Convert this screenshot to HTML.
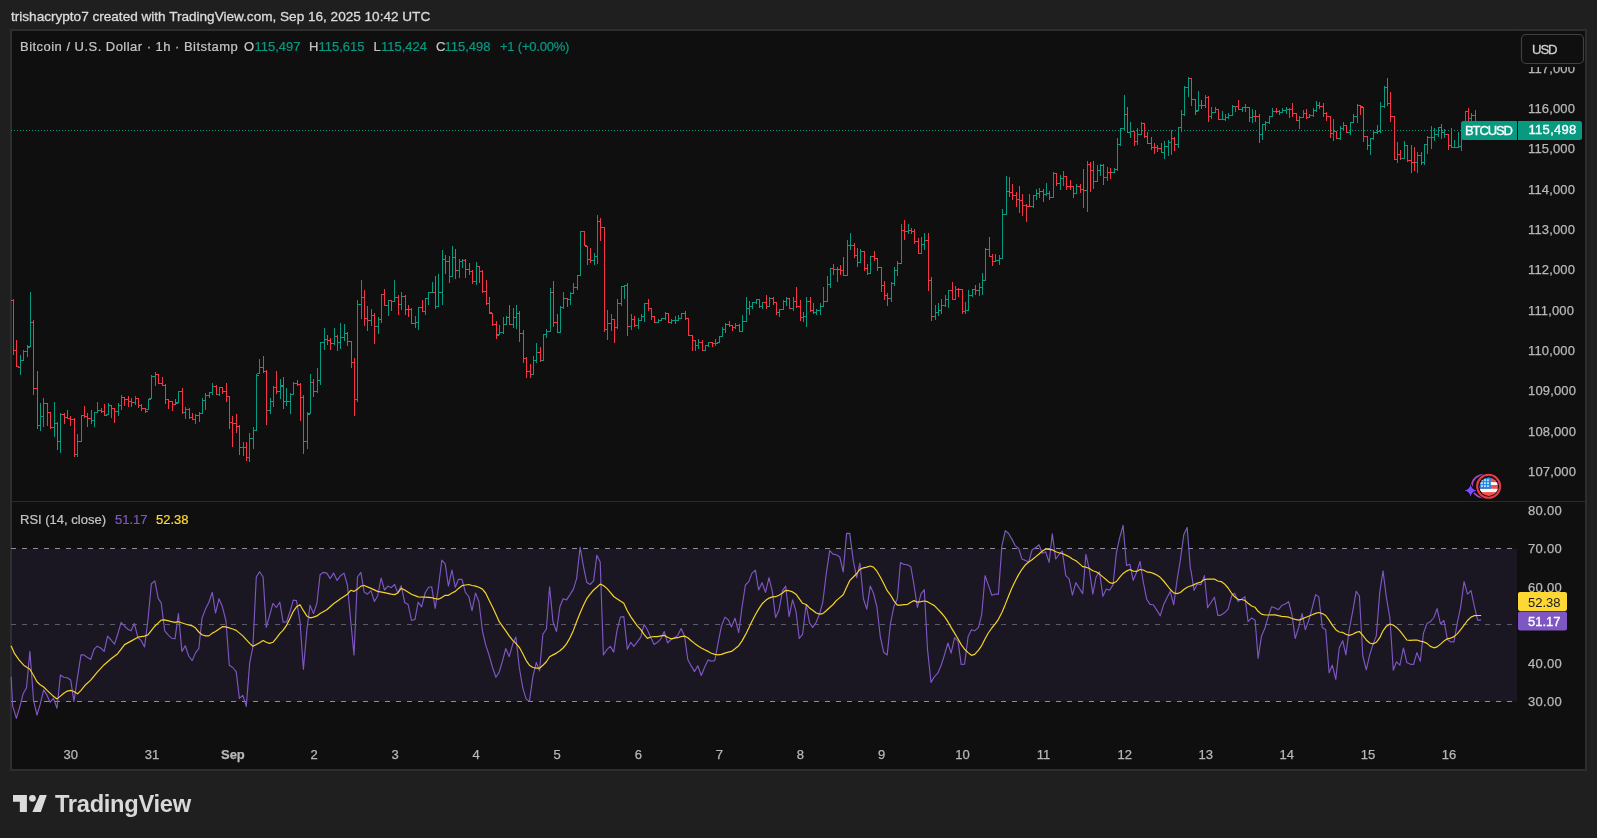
<!DOCTYPE html>
<html lang="en"><head><meta charset="utf-8"><title>BTCUSD chart</title>
<style>
html,body{margin:0;padding:0;background:#1f1f1f;}
body{width:1597px;height:838px;overflow:hidden;position:relative;font-family:"Liberation Sans",sans-serif;}
svg{position:absolute;left:0;top:0;will-change:transform;}
.hd,.lg,.logo{will-change:transform;}
svg text{font-family:"Liberation Sans",sans-serif;font-size:13px;fill:#b8b8b8;}
#paxis text,#raxis text,#taxis text{stroke:#b8b8b8;stroke-width:0.25px;}
#paxis text{letter-spacing:0.15px;}
#raxis text{letter-spacing:0.3px;}
.hd{position:absolute;left:11px;top:9px;font-size:13.6px;line-height:16px;color:#dbdbdb;white-space:nowrap;letter-spacing:-0.01px;-webkit-text-stroke:0.3px #dbdbdb;}
.lg{position:absolute;left:20px;top:39px;font-size:13px;line-height:16px;color:#c4c4c4;white-space:nowrap;}
.lg span{position:absolute;top:0;-webkit-text-stroke:0.22px currentColor;}
.gr{color:#089981;}
.logo{position:absolute;left:55px;top:790px;font-size:23.7px;line-height:28px;font-weight:bold;color:#d9d9d9;letter-spacing:-0.3px;white-space:nowrap;}
</style></head><body>
<svg width="1597" height="838" viewBox="0 0 1597 838">
<rect x="11" y="30" width="1575" height="740" fill="#0f0f0f" stroke="#2e2e2e" stroke-width="2"/>
<rect x="12" y="501" width="1573" height="1" fill="#2a2a2a"/>
<!-- RSI band -->
<rect x="12" y="549" width="1505" height="152.5" fill="#1a1622"/>
<g stroke="#8e8e9a" stroke-width="1" stroke-dasharray="5 6" shape-rendering="crispEdges">
<path d="M11 548.5H1517"/><path d="M11 701.5H1517"/><path d="M11 624.5H1517" stroke="#5c5c68"/></g>
<!-- price line -->
<path d="M11 130.5H1461" stroke="#089981" stroke-width="1" stroke-dasharray="1 2" shape-rendering="crispEdges"/>
<g id="bars"><g stroke-width="1" fill="none" shape-rendering="crispEdges"><path d="M13.5 299V355M11 300.5h2.5M13.5 350.5h2.5M16.5 340V367M14 350.5h2.5M16.5 366.5h2.5" stroke="#f23645"/><path d="M20.5 355V375M18 367.5h2.5M20.5 360.5h2.5M23.5 350V361M21 360.5h2.5M23.5 351.5h2.5M27.5 345V357M25 351.5h2.5M27.5 347.5h2.5M30.5 292V347M28 346.5h2.5M30.5 322.5h2.5" stroke="#089981"/><path d="M33.5 320V395M31 322.5h2.5M33.5 388.5h2.5M37.5 371V429M35 388.5h2.5M37.5 425.5h2.5" stroke="#f23645"/><path d="M40.5 403V431M38 425.5h2.5M40.5 416.5h2.5M43.5 398V427M41 416.5h2.5M43.5 403.5h2.5" stroke="#089981"/><path d="M47.5 403V426M45 403.5h2.5M47.5 412.5h2.5M50.5 412V429M48 412.5h2.5M50.5 427.5h2.5" stroke="#f23645"/><path d="M54.5 402V437M52 427.5h2.5M54.5 423.5h2.5" stroke="#089981"/><path d="M57.5 422V450M55 423.5h2.5M57.5 441.5h2.5" stroke="#f23645"/><path d="M60.5 413V453M58 441.5h2.5M60.5 414.5h2.5" stroke="#089981"/><path d="M64.5 413V424M62 414.5h2.5M64.5 417.5h2.5M67.5 410V419M65 417.5h2.5M67.5 418.5h2.5M70.5 416V426M68 418.5h2.5M70.5 419.5h2.5M74.5 418V457M72 419.5h2.5M74.5 454.5h2.5" stroke="#f23645"/><path d="M77.5 434V457M75 454.5h2.5M77.5 441.5h2.5M81.5 415V442M79 441.5h2.5M81.5 415.5h2.5" stroke="#089981"/><path d="M84.5 406V418M82 415.5h2.5M84.5 416.5h2.5M87.5 413V427M85 416.5h2.5M87.5 418.5h2.5M91.5 410V424M89 418.5h2.5M91.5 420.5h2.5" stroke="#f23645"/><path d="M94.5 412V427M92 420.5h2.5M94.5 412.5h2.5M97.5 402V413M95 412.5h2.5M97.5 410.5h2.5" stroke="#089981"/><path d="M101.5 408V413M99 410.5h2.5M101.5 411.5h2.5M104.5 404V416M102 411.5h2.5M104.5 415.5h2.5" stroke="#f23645"/><path d="M108.5 403V415M106 414.5h2.5M108.5 405.5h2.5" stroke="#089981"/><path d="M111.5 405V418M109 405.5h2.5M111.5 408.5h2.5M114.5 408V423M112 408.5h2.5M114.5 411.5h2.5" stroke="#f23645"/><path d="M118.5 403V416M116 411.5h2.5M118.5 405.5h2.5M121.5 395V410M119 405.5h2.5M121.5 397.5h2.5" stroke="#089981"/><path d="M124.5 397V406M122 397.5h2.5M124.5 399.5h2.5M128.5 396V407M126 399.5h2.5M128.5 401.5h2.5M131.5 398V407M129 401.5h2.5M131.5 402.5h2.5" stroke="#f23645"/><path d="M135.5 396V405M133 402.5h2.5M135.5 398.5h2.5" stroke="#089981"/><path d="M138.5 398V408M136 398.5h2.5M138.5 405.5h2.5M141.5 404V411M139 405.5h2.5M141.5 408.5h2.5M145.5 408V413M143 408.5h2.5M145.5 411.5h2.5" stroke="#f23645"/><path d="M148.5 399V410M146 409.5h2.5M148.5 399.5h2.5M151.5 375V399M149 398.5h2.5M151.5 376.5h2.5M155.5 372V386M153 376.5h2.5M155.5 374.5h2.5" stroke="#089981"/><path d="M158.5 374V384M156 374.5h2.5M158.5 383.5h2.5M162.5 377V386M160 383.5h2.5M162.5 385.5h2.5M165.5 384V404M163 385.5h2.5M165.5 399.5h2.5M168.5 399V409M166 399.5h2.5M168.5 401.5h2.5M172.5 401V411M170 401.5h2.5M172.5 404.5h2.5M175.5 399V405M173 404.5h2.5M175.5 403.5h2.5" stroke="#f23645"/><path d="M178.5 391V403M176 402.5h2.5M178.5 391.5h2.5" stroke="#089981"/><path d="M182.5 388V414M180 391.5h2.5M182.5 412.5h2.5" stroke="#f23645"/><path d="M185.5 407V419M183 412.5h2.5M185.5 409.5h2.5" stroke="#089981"/><path d="M189.5 408V419M187 409.5h2.5M189.5 417.5h2.5M192.5 413V420M190 417.5h2.5M192.5 419.5h2.5" stroke="#f23645"/><path d="M195.5 414V424M193 419.5h2.5M195.5 415.5h2.5M199.5 412V422M197 415.5h2.5M199.5 413.5h2.5M202.5 398V414M200 413.5h2.5M202.5 400.5h2.5M205.5 393V410M203 400.5h2.5M205.5 395.5h2.5M209.5 392V398M207 395.5h2.5M209.5 392.5h2.5M212.5 383V395M210 392.5h2.5M212.5 386.5h2.5" stroke="#089981"/><path d="M216.5 385V395M214 386.5h2.5M216.5 394.5h2.5" stroke="#f23645"/><path d="M219.5 387V396M217 394.5h2.5M219.5 387.5h2.5" stroke="#089981"/><path d="M222.5 387V394M220 387.5h2.5M222.5 391.5h2.5M226.5 383V402M224 391.5h2.5M226.5 396.5h2.5M229.5 396V429M227 396.5h2.5M229.5 422.5h2.5M232.5 416V447M230 422.5h2.5M232.5 423.5h2.5M236.5 414V433M234 423.5h2.5M236.5 426.5h2.5M239.5 425V455M237 426.5h2.5M239.5 447.5h2.5" stroke="#f23645"/><path d="M243.5 442V456M241 447.5h2.5M243.5 447.5h2.5" stroke="#089981"/><path d="M246.5 442V461M244 447.5h2.5M246.5 457.5h2.5" stroke="#f23645"/><path d="M249.5 433V462M247 457.5h2.5M249.5 438.5h2.5M253.5 427V449M251 438.5h2.5M253.5 430.5h2.5M256.5 374V431M254 430.5h2.5M256.5 375.5h2.5M259.5 359V374M257 373.5h2.5M259.5 367.5h2.5" stroke="#089981"/><path d="M263.5 356V373M261 367.5h2.5M263.5 371.5h2.5M266.5 370V425M264 371.5h2.5M266.5 410.5h2.5" stroke="#f23645"/><path d="M270.5 398V414M268 410.5h2.5M270.5 401.5h2.5M273.5 386V407M271 401.5h2.5M273.5 387.5h2.5" stroke="#089981"/><path d="M276.5 371V394M274 387.5h2.5M276.5 391.5h2.5" stroke="#f23645"/><path d="M280.5 379V399M278 391.5h2.5M280.5 386.5h2.5" stroke="#089981"/><path d="M283.5 377V409M281 385.5h2.5M283.5 401.5h2.5" stroke="#f23645"/><path d="M286.5 388V406M284 401.5h2.5M286.5 401.5h2.5M290.5 393V414M288 401.5h2.5M290.5 394.5h2.5M293.5 382V395M291 394.5h2.5M293.5 383.5h2.5" stroke="#089981"/><path d="M297.5 380V386M295 383.5h2.5M297.5 384.5h2.5M300.5 383V421M298 384.5h2.5M300.5 397.5h2.5M303.5 395V454M301 397.5h2.5M303.5 441.5h2.5" stroke="#f23645"/><path d="M307.5 412V449M305 441.5h2.5M307.5 414.5h2.5M310.5 374V414M308 413.5h2.5M310.5 382.5h2.5" stroke="#089981"/><path d="M313.5 379V397M311 382.5h2.5M313.5 391.5h2.5" stroke="#f23645"/><path d="M317.5 368V393M315 391.5h2.5M317.5 380.5h2.5M320.5 342V385M318 380.5h2.5M320.5 342.5h2.5M324.5 328V350M322 342.5h2.5M324.5 339.5h2.5" stroke="#089981"/><path d="M327.5 335V345M325 339.5h2.5M327.5 340.5h2.5M330.5 338V350M328 340.5h2.5M330.5 343.5h2.5" stroke="#f23645"/><path d="M334.5 328V345M332 343.5h2.5M334.5 336.5h2.5" stroke="#089981"/><path d="M337.5 335V351M335 336.5h2.5M337.5 342.5h2.5" stroke="#f23645"/><path d="M340.5 323V349M338 342.5h2.5M340.5 337.5h2.5M344.5 324V341M342 337.5h2.5M344.5 333.5h2.5" stroke="#089981"/><path d="M347.5 332V346M345 333.5h2.5M347.5 341.5h2.5M351.5 341V368M349 341.5h2.5M351.5 362.5h2.5M354.5 358V416M352 362.5h2.5M354.5 399.5h2.5" stroke="#f23645"/><path d="M357.5 300V402M355 399.5h2.5M357.5 304.5h2.5M361.5 280V319M359 304.5h2.5M361.5 297.5h2.5" stroke="#089981"/><path d="M364.5 290V326M362 297.5h2.5M364.5 318.5h2.5M367.5 306V331M365 318.5h2.5M367.5 320.5h2.5" stroke="#f23645"/><path d="M371.5 309V326M369 320.5h2.5M371.5 315.5h2.5" stroke="#089981"/><path d="M374.5 313V344M372 315.5h2.5M374.5 326.5h2.5" stroke="#f23645"/><path d="M378.5 317V334M376 326.5h2.5M378.5 319.5h2.5M381.5 294V323M379 319.5h2.5M381.5 294.5h2.5" stroke="#089981"/><path d="M384.5 289V306M382 294.5h2.5M384.5 305.5h2.5" stroke="#f23645"/><path d="M388.5 300V316M386 305.5h2.5M388.5 300.5h2.5" stroke="#089981"/><path d="M391.5 300V311M389 300.5h2.5M391.5 301.5h2.5" stroke="#f23645"/><path d="M394.5 280V302M392 301.5h2.5M394.5 297.5h2.5" stroke="#089981"/><path d="M398.5 295V315M396 297.5h2.5M398.5 304.5h2.5" stroke="#f23645"/><path d="M401.5 292V310M399 304.5h2.5M401.5 296.5h2.5" stroke="#089981"/><path d="M405.5 295V315M403 296.5h2.5M405.5 309.5h2.5M408.5 305V317M406 309.5h2.5M408.5 309.5h2.5M411.5 308V324M409 309.5h2.5M411.5 323.5h2.5" stroke="#f23645"/><path d="M415.5 316V328M413 323.5h2.5M415.5 322.5h2.5M418.5 307V330M416 322.5h2.5M418.5 307.5h2.5" stroke="#089981"/><path d="M422.5 300V312M420 307.5h2.5M422.5 311.5h2.5" stroke="#f23645"/><path d="M425.5 298V315M423 311.5h2.5M425.5 298.5h2.5M428.5 292V305M426 298.5h2.5M428.5 292.5h2.5M432.5 282V293M430 292.5h2.5M432.5 292.5h2.5" stroke="#089981"/><path d="M435.5 276V309M433 292.5h2.5M435.5 306.5h2.5" stroke="#f23645"/><path d="M438.5 274V307M436 306.5h2.5M438.5 292.5h2.5M442.5 250V305M440 292.5h2.5M442.5 259.5h2.5" stroke="#089981"/><path d="M445.5 255V274M443 259.5h2.5M445.5 261.5h2.5M449.5 256V283M447 261.5h2.5M449.5 276.5h2.5" stroke="#f23645"/><path d="M452.5 246V277M450 276.5h2.5M452.5 257.5h2.5" stroke="#089981"/><path d="M455.5 249V279M453 257.5h2.5M455.5 270.5h2.5" stroke="#f23645"/><path d="M459.5 259V278M457 270.5h2.5M459.5 261.5h2.5M462.5 259V268M460 261.5h2.5M462.5 260.5h2.5" stroke="#089981"/><path d="M465.5 259V278M463 260.5h2.5M465.5 269.5h2.5M469.5 263V275M467 269.5h2.5M469.5 271.5h2.5M472.5 270V284M470 271.5h2.5M472.5 281.5h2.5" stroke="#f23645"/><path d="M476.5 262V285M474 281.5h2.5M476.5 266.5h2.5" stroke="#089981"/><path d="M479.5 266V283M477 266.5h2.5M479.5 271.5h2.5M482.5 270V293M480 271.5h2.5M482.5 291.5h2.5M486.5 280V305M484 291.5h2.5M486.5 303.5h2.5M489.5 297V314M487 303.5h2.5M489.5 312.5h2.5M492.5 313V326M490 313.5h2.5M492.5 324.5h2.5M496.5 321V339M494 324.5h2.5M496.5 335.5h2.5" stroke="#f23645"/><path d="M499.5 325V335M497 334.5h2.5M499.5 332.5h2.5M503.5 317V334M501 332.5h2.5M503.5 324.5h2.5M506.5 316V325M504 324.5h2.5M506.5 317.5h2.5" stroke="#089981"/><path d="M509.5 305V325M507 317.5h2.5M509.5 324.5h2.5" stroke="#f23645"/><path d="M513.5 308V328M511 324.5h2.5M513.5 317.5h2.5M516.5 305V329M514 317.5h2.5M516.5 313.5h2.5" stroke="#089981"/><path d="M519.5 311V342M517 313.5h2.5M519.5 333.5h2.5M523.5 330V363M521 333.5h2.5M523.5 358.5h2.5M526.5 357V378M524 358.5h2.5M526.5 371.5h2.5M530.5 364V378M528 371.5h2.5M530.5 374.5h2.5" stroke="#f23645"/><path d="M533.5 356V375M531 374.5h2.5M533.5 360.5h2.5M536.5 343V363M534 360.5h2.5M536.5 352.5h2.5" stroke="#089981"/><path d="M540.5 347V362M538 352.5h2.5M540.5 360.5h2.5" stroke="#f23645"/><path d="M543.5 334V361M541 360.5h2.5M543.5 334.5h2.5M546.5 329V338M544 334.5h2.5M546.5 331.5h2.5M550.5 288V332M548 331.5h2.5M550.5 292.5h2.5" stroke="#089981"/><path d="M553.5 281V327M551 292.5h2.5M553.5 322.5h2.5M557.5 314V333M555 322.5h2.5M557.5 332.5h2.5" stroke="#f23645"/><path d="M560.5 306V333M558 332.5h2.5M560.5 307.5h2.5M563.5 292V309M561 307.5h2.5M563.5 298.5h2.5" stroke="#089981"/><path d="M567.5 298V307M565 298.5h2.5M567.5 299.5h2.5" stroke="#f23645"/><path d="M570.5 292V305M568 299.5h2.5M570.5 293.5h2.5M573.5 283V294M571 293.5h2.5M573.5 287.5h2.5M577.5 275V290M575 287.5h2.5M577.5 275.5h2.5M580.5 231V276M578 275.5h2.5M580.5 231.5h2.5" stroke="#089981"/><path d="M584.5 231V246M582 231.5h2.5M584.5 245.5h2.5M587.5 246V265M585 246.5h2.5M587.5 259.5h2.5M590.5 248V263M588 259.5h2.5M590.5 260.5h2.5" stroke="#f23645"/><path d="M594.5 253V265M592 260.5h2.5M594.5 256.5h2.5M597.5 215V264M595 256.5h2.5M597.5 221.5h2.5" stroke="#089981"/><path d="M600.5 218V241M598 221.5h2.5M600.5 227.5h2.5M604.5 227V332M602 227.5h2.5M604.5 329.5h2.5" stroke="#f23645"/><path d="M607.5 310V340M605 329.5h2.5M607.5 323.5h2.5M611.5 314V331M609 323.5h2.5M611.5 319.5h2.5" stroke="#089981"/><path d="M614.5 319V343M612 319.5h2.5M614.5 327.5h2.5" stroke="#f23645"/><path d="M617.5 299V329M615 327.5h2.5M617.5 303.5h2.5M621.5 286V306M619 303.5h2.5M621.5 286.5h2.5M624.5 285V299M622 286.5h2.5M624.5 285.5h2.5" stroke="#089981"/><path d="M627.5 283V336M625 285.5h2.5M627.5 326.5h2.5" stroke="#f23645"/><path d="M631.5 314V330M629 326.5h2.5M631.5 319.5h2.5" stroke="#089981"/><path d="M634.5 316V327M632 319.5h2.5M634.5 325.5h2.5" stroke="#f23645"/><path d="M638.5 318V329M636 325.5h2.5M638.5 320.5h2.5M641.5 314V321M639 320.5h2.5M641.5 316.5h2.5M644.5 303V322M642 316.5h2.5M644.5 303.5h2.5" stroke="#089981"/><path d="M648.5 299V311M646 303.5h2.5M648.5 308.5h2.5M651.5 308V320M649 308.5h2.5M651.5 316.5h2.5M654.5 316V323M652 316.5h2.5M654.5 322.5h2.5" stroke="#f23645"/><path d="M658.5 319V323M656 322.5h2.5M658.5 320.5h2.5M661.5 318V321M659 320.5h2.5M661.5 318.5h2.5M665.5 312V320M663 318.5h2.5M665.5 313.5h2.5" stroke="#089981"/><path d="M668.5 313V323M666 313.5h2.5M668.5 322.5h2.5" stroke="#f23645"/><path d="M671.5 319V324M669 322.5h2.5M671.5 320.5h2.5M675.5 316V324M673 320.5h2.5M675.5 320.5h2.5M678.5 315V321M676 320.5h2.5M678.5 318.5h2.5M681.5 313V319M679 318.5h2.5M681.5 313.5h2.5" stroke="#089981"/><path d="M685.5 311V320M683 313.5h2.5M685.5 318.5h2.5M688.5 318V336M686 318.5h2.5M688.5 335.5h2.5M692.5 335V351M690 335.5h2.5M692.5 340.5h2.5M695.5 340V351M693 340.5h2.5M695.5 345.5h2.5" stroke="#f23645"/><path d="M698.5 339V349M696 345.5h2.5M698.5 342.5h2.5" stroke="#089981"/><path d="M702.5 340V351M700 342.5h2.5M702.5 350.5h2.5" stroke="#f23645"/><path d="M705.5 345V351M703 350.5h2.5M705.5 345.5h2.5M708.5 342V347M706 345.5h2.5M708.5 342.5h2.5" stroke="#089981"/><path d="M712.5 342V347M710 342.5h2.5M712.5 343.5h2.5" stroke="#f23645"/><path d="M715.5 339V346M713 343.5h2.5M715.5 343.5h2.5M719.5 336V343M717 342.5h2.5M719.5 336.5h2.5M722.5 327V337M720 336.5h2.5M722.5 329.5h2.5M725.5 323V333M723 329.5h2.5M725.5 324.5h2.5" stroke="#089981"/><path d="M729.5 321V327M727 324.5h2.5M729.5 325.5h2.5M732.5 325V331M730 325.5h2.5M732.5 327.5h2.5" stroke="#f23645"/><path d="M735.5 323V329M733 327.5h2.5M735.5 325.5h2.5" stroke="#089981"/><path d="M739.5 324V332M737 325.5h2.5M739.5 331.5h2.5" stroke="#f23645"/><path d="M742.5 315V332M740 331.5h2.5M742.5 321.5h2.5M746.5 297V322M744 321.5h2.5M746.5 308.5h2.5M749.5 301V315M747 308.5h2.5M749.5 306.5h2.5M752.5 302V309M750 306.5h2.5M752.5 302.5h2.5M756.5 299V304M754 302.5h2.5M756.5 299.5h2.5" stroke="#089981"/><path d="M759.5 299V308M757 299.5h2.5M759.5 306.5h2.5" stroke="#f23645"/><path d="M762.5 302V309M760 306.5h2.5M762.5 302.5h2.5" stroke="#089981"/><path d="M766.5 295V309M764 302.5h2.5M766.5 306.5h2.5" stroke="#f23645"/><path d="M769.5 297V307M767 306.5h2.5M769.5 298.5h2.5" stroke="#089981"/><path d="M773.5 297V305M771 298.5h2.5M773.5 302.5h2.5M776.5 302V315M774 302.5h2.5M776.5 312.5h2.5" stroke="#f23645"/><path d="M779.5 309V317M777 312.5h2.5M779.5 309.5h2.5M783.5 300V310M781 309.5h2.5M783.5 301.5h2.5M786.5 297V306M784 301.5h2.5M786.5 298.5h2.5" stroke="#089981"/><path d="M789.5 298V309M787 298.5h2.5M789.5 308.5h2.5" stroke="#f23645"/><path d="M793.5 297V311M791 308.5h2.5M793.5 301.5h2.5" stroke="#089981"/><path d="M796.5 287V308M794 301.5h2.5M796.5 306.5h2.5M800.5 300V321M798 306.5h2.5M800.5 317.5h2.5" stroke="#f23645"/><path d="M803.5 312V322M801 317.5h2.5M803.5 316.5h2.5M806.5 297V327M804 316.5h2.5M806.5 301.5h2.5" stroke="#089981"/><path d="M810.5 297V312M808 301.5h2.5M810.5 310.5h2.5M813.5 303V314M811 310.5h2.5M813.5 312.5h2.5" stroke="#f23645"/><path d="M816.5 309V315M814 312.5h2.5M816.5 310.5h2.5M820.5 303V315M818 310.5h2.5M820.5 306.5h2.5M823.5 287V307M821 306.5h2.5M823.5 301.5h2.5M827.5 276V302M825 301.5h2.5M827.5 284.5h2.5M830.5 268V288M828 284.5h2.5M830.5 268.5h2.5" stroke="#089981"/><path d="M833.5 264V275M831 268.5h2.5M833.5 269.5h2.5M837.5 267V282M835 269.5h2.5M837.5 269.5h2.5M840.5 265V275M838 269.5h2.5M840.5 270.5h2.5M843.5 257V276M841 270.5h2.5M843.5 275.5h2.5" stroke="#f23645"/><path d="M847.5 240V276M845 275.5h2.5M847.5 245.5h2.5M850.5 233V250M848 245.5h2.5M850.5 245.5h2.5" stroke="#089981"/><path d="M854.5 243V258M852 245.5h2.5M854.5 255.5h2.5M857.5 248V267M855 255.5h2.5M857.5 262.5h2.5" stroke="#f23645"/><path d="M860.5 249V263M858 262.5h2.5M860.5 251.5h2.5" stroke="#089981"/><path d="M864.5 251V271M862 251.5h2.5M864.5 268.5h2.5M867.5 264V275M865 268.5h2.5M867.5 273.5h2.5" stroke="#f23645"/><path d="M870.5 256V274M868 273.5h2.5M870.5 256.5h2.5" stroke="#089981"/><path d="M874.5 251V261M872 256.5h2.5M874.5 258.5h2.5M877.5 258V271M875 258.5h2.5M877.5 267.5h2.5M881.5 267V292M879 267.5h2.5M881.5 285.5h2.5M884.5 281V300M882 285.5h2.5M884.5 295.5h2.5M887.5 293V306M885 295.5h2.5M887.5 298.5h2.5" stroke="#f23645"/><path d="M891.5 282V302M889 298.5h2.5M891.5 283.5h2.5M894.5 267V286M892 283.5h2.5M894.5 270.5h2.5M897.5 261V276M895 270.5h2.5M897.5 263.5h2.5M901.5 224V264M899 263.5h2.5M901.5 230.5h2.5" stroke="#089981"/><path d="M904.5 220V240M902 230.5h2.5M904.5 231.5h2.5" stroke="#f23645"/><path d="M908.5 224V234M906 231.5h2.5M908.5 230.5h2.5" stroke="#089981"/><path d="M911.5 228V234M909 230.5h2.5M911.5 231.5h2.5M914.5 229V244M912 231.5h2.5M914.5 241.5h2.5M918.5 238V254M916 241.5h2.5M918.5 253.5h2.5" stroke="#f23645"/><path d="M921.5 237V254M919 253.5h2.5M921.5 244.5h2.5M924.5 233V250M922 244.5h2.5M924.5 240.5h2.5" stroke="#089981"/><path d="M928.5 233V291M926 240.5h2.5M928.5 280.5h2.5M931.5 277V321M929 280.5h2.5M931.5 316.5h2.5" stroke="#f23645"/><path d="M935.5 305V320M933 316.5h2.5M935.5 312.5h2.5M938.5 303V316M936 312.5h2.5M938.5 310.5h2.5M941.5 299V314M939 310.5h2.5M941.5 305.5h2.5M945.5 295V307M943 305.5h2.5M945.5 299.5h2.5M948.5 290V308M946 299.5h2.5M948.5 290.5h2.5" stroke="#089981"/><path d="M952.5 282V300M950 290.5h2.5M952.5 299.5h2.5" stroke="#f23645"/><path d="M955.5 286V300M953 299.5h2.5M955.5 289.5h2.5" stroke="#089981"/><path d="M958.5 288V297M956 289.5h2.5M958.5 289.5h2.5M962.5 289V314M960 289.5h2.5M962.5 311.5h2.5" stroke="#f23645"/><path d="M965.5 302V314M963 311.5h2.5M965.5 310.5h2.5M968.5 290V311M966 310.5h2.5M968.5 295.5h2.5M972.5 289V297M970 295.5h2.5M972.5 289.5h2.5" stroke="#089981"/><path d="M975.5 285V295M973 289.5h2.5M975.5 290.5h2.5" stroke="#f23645"/><path d="M979.5 283V296M977 290.5h2.5M979.5 287.5h2.5M982.5 273V295M980 287.5h2.5M982.5 280.5h2.5M985.5 248V281M983 280.5h2.5M985.5 249.5h2.5" stroke="#089981"/><path d="M989.5 237V257M987 249.5h2.5M989.5 256.5h2.5M992.5 254V266M990 256.5h2.5M992.5 261.5h2.5" stroke="#f23645"/><path d="M995.5 254V262M993 261.5h2.5M995.5 260.5h2.5M999.5 255V265M997 260.5h2.5M999.5 258.5h2.5M1002.5 209V259M1000 258.5h2.5M1002.5 214.5h2.5M1006.5 176V215M1004 214.5h2.5M1006.5 191.5h2.5" stroke="#089981"/><path d="M1009.5 177V197M1007 191.5h2.5M1009.5 192.5h2.5M1012.5 184V200M1010 192.5h2.5M1012.5 195.5h2.5M1016.5 192V207M1014 195.5h2.5M1016.5 199.5h2.5M1019.5 186V213M1017 199.5h2.5M1019.5 200.5h2.5M1022.5 194V216M1020 200.5h2.5M1022.5 205.5h2.5M1026.5 204V222M1024 205.5h2.5M1026.5 206.5h2.5M1029.5 194V207M1027 206.5h2.5M1029.5 206.5h2.5" stroke="#f23645"/><path d="M1033.5 195V208M1031 206.5h2.5M1033.5 195.5h2.5M1036.5 189V200M1034 195.5h2.5M1036.5 193.5h2.5M1039.5 188V198M1037 193.5h2.5M1039.5 191.5h2.5" stroke="#089981"/><path d="M1043.5 189V202M1041 191.5h2.5M1043.5 194.5h2.5" stroke="#f23645"/><path d="M1046.5 183V196M1044 194.5h2.5M1046.5 193.5h2.5" stroke="#089981"/><path d="M1049.5 191V200M1047 193.5h2.5M1049.5 197.5h2.5" stroke="#f23645"/><path d="M1053.5 172V198M1051 197.5h2.5M1053.5 173.5h2.5" stroke="#089981"/><path d="M1056.5 173V186M1054 173.5h2.5M1056.5 183.5h2.5" stroke="#f23645"/><path d="M1060.5 175V190M1058 183.5h2.5M1060.5 178.5h2.5M1063.5 171V186M1061 178.5h2.5M1063.5 176.5h2.5" stroke="#089981"/><path d="M1066.5 176V190M1064 176.5h2.5M1066.5 186.5h2.5M1070.5 180V190M1068 186.5h2.5M1070.5 186.5h2.5M1073.5 186V198M1071 186.5h2.5M1073.5 193.5h2.5" stroke="#f23645"/><path d="M1076.5 184V194M1074 193.5h2.5M1076.5 186.5h2.5" stroke="#089981"/><path d="M1080.5 184V193M1078 186.5h2.5M1080.5 189.5h2.5M1083.5 169V208M1081 189.5h2.5M1083.5 190.5h2.5" stroke="#f23645"/><path d="M1087.5 161V212M1085 190.5h2.5M1087.5 164.5h2.5" stroke="#089981"/><path d="M1090.5 162V192M1088 164.5h2.5M1090.5 170.5h2.5M1093.5 161V189M1091 170.5h2.5M1093.5 181.5h2.5" stroke="#f23645"/><path d="M1097.5 165V182M1095 181.5h2.5M1097.5 170.5h2.5M1100.5 164V176M1098 170.5h2.5M1100.5 165.5h2.5" stroke="#089981"/><path d="M1103.5 164V185M1101 165.5h2.5M1103.5 177.5h2.5" stroke="#f23645"/><path d="M1107.5 167V181M1105 177.5h2.5M1107.5 172.5h2.5" stroke="#089981"/><path d="M1110.5 168V179M1108 172.5h2.5M1110.5 172.5h2.5" stroke="#f23645"/><path d="M1114.5 168V173M1112 172.5h2.5M1114.5 169.5h2.5M1117.5 138V171M1115 169.5h2.5M1117.5 144.5h2.5M1120.5 128V146M1118 144.5h2.5M1120.5 128.5h2.5M1124.5 95V131M1122 128.5h2.5M1124.5 114.5h2.5" stroke="#089981"/><path d="M1127.5 107V133M1125 114.5h2.5M1127.5 132.5h2.5" stroke="#f23645"/><path d="M1130.5 122V138M1128 132.5h2.5M1130.5 131.5h2.5" stroke="#089981"/><path d="M1134.5 131V146M1132 131.5h2.5M1134.5 141.5h2.5" stroke="#f23645"/><path d="M1137.5 128V145M1135 141.5h2.5M1137.5 134.5h2.5M1141.5 122V135M1139 134.5h2.5M1141.5 123.5h2.5" stroke="#089981"/><path d="M1144.5 123V138M1142 123.5h2.5M1144.5 136.5h2.5M1147.5 132V144M1145 136.5h2.5M1147.5 143.5h2.5M1151.5 137V150M1149 143.5h2.5M1151.5 147.5h2.5M1154.5 143V154M1152 147.5h2.5M1154.5 147.5h2.5M1157.5 145V152M1155 147.5h2.5M1157.5 148.5h2.5M1161.5 143V153M1159 148.5h2.5M1161.5 152.5h2.5" stroke="#f23645"/><path d="M1164.5 141V159M1162 152.5h2.5M1164.5 146.5h2.5M1168.5 140V156M1166 146.5h2.5M1168.5 142.5h2.5M1171.5 130V155M1169 142.5h2.5M1171.5 138.5h2.5" stroke="#089981"/><path d="M1174.5 137V151M1172 138.5h2.5M1174.5 144.5h2.5" stroke="#f23645"/><path d="M1178.5 127V148M1176 144.5h2.5M1178.5 127.5h2.5M1181.5 110V132M1179 127.5h2.5M1181.5 114.5h2.5M1184.5 86V116M1182 114.5h2.5M1184.5 87.5h2.5M1188.5 77V97M1186 87.5h2.5M1188.5 78.5h2.5" stroke="#089981"/><path d="M1191.5 78V106M1189 78.5h2.5M1191.5 99.5h2.5M1195.5 99V115M1193 99.5h2.5M1195.5 111.5h2.5" stroke="#f23645"/><path d="M1198.5 91V111M1196 110.5h2.5M1198.5 105.5h2.5" stroke="#089981"/><path d="M1201.5 100V109M1199 105.5h2.5M1201.5 105.5h2.5" stroke="#f23645"/><path d="M1205.5 95V108M1203 105.5h2.5M1205.5 97.5h2.5" stroke="#089981"/><path d="M1208.5 96V122M1206 97.5h2.5M1208.5 116.5h2.5" stroke="#f23645"/><path d="M1211.5 107V119M1209 116.5h2.5M1211.5 112.5h2.5M1215.5 107V113M1213 112.5h2.5M1215.5 109.5h2.5" stroke="#089981"/><path d="M1218.5 109V120M1216 109.5h2.5M1218.5 119.5h2.5" stroke="#f23645"/><path d="M1222.5 111V120M1220 119.5h2.5M1222.5 119.5h2.5M1225.5 114V121M1223 119.5h2.5M1225.5 117.5h2.5M1228.5 113V119M1226 117.5h2.5M1228.5 115.5h2.5M1232.5 105V116M1230 115.5h2.5M1232.5 106.5h2.5M1235.5 106V112M1233 106.5h2.5M1235.5 106.5h2.5" stroke="#089981"/><path d="M1238.5 100V110M1236 106.5h2.5M1238.5 109.5h2.5" stroke="#f23645"/><path d="M1242.5 107V112M1240 109.5h2.5M1242.5 107.5h2.5M1245.5 104V112M1243 107.5h2.5M1245.5 107.5h2.5" stroke="#089981"/><path d="M1249.5 107V122M1247 107.5h2.5M1249.5 117.5h2.5" stroke="#f23645"/><path d="M1252.5 109V123M1250 117.5h2.5M1252.5 116.5h2.5" stroke="#089981"/><path d="M1255.5 110V122M1253 116.5h2.5M1255.5 116.5h2.5M1259.5 114V143M1257 116.5h2.5M1259.5 134.5h2.5" stroke="#f23645"/><path d="M1262.5 124V140M1260 134.5h2.5M1262.5 124.5h2.5M1265.5 121V131M1263 124.5h2.5M1265.5 122.5h2.5M1269.5 116V124M1267 122.5h2.5M1269.5 116.5h2.5M1272.5 108V117M1270 116.5h2.5M1272.5 111.5h2.5" stroke="#089981"/><path d="M1276.5 108V113M1274 111.5h2.5M1276.5 111.5h2.5M1279.5 110V115M1277 111.5h2.5M1279.5 112.5h2.5" stroke="#f23645"/><path d="M1282.5 108V113M1280 112.5h2.5M1282.5 110.5h2.5M1286.5 107V114M1284 110.5h2.5M1286.5 109.5h2.5M1289.5 108V118M1287 109.5h2.5M1289.5 109.5h2.5" stroke="#089981"/><path d="M1292.5 103V117M1290 109.5h2.5M1292.5 113.5h2.5M1296.5 113V121M1294 113.5h2.5M1296.5 120.5h2.5" stroke="#f23645"/><path d="M1299.5 116V129M1297 120.5h2.5M1299.5 117.5h2.5M1303.5 110V118M1301 117.5h2.5M1303.5 113.5h2.5" stroke="#089981"/><path d="M1306.5 109V119M1304 113.5h2.5M1306.5 117.5h2.5" stroke="#f23645"/><path d="M1309.5 114V118M1307 117.5h2.5M1309.5 115.5h2.5M1313.5 108V117M1311 115.5h2.5M1313.5 110.5h2.5M1316.5 101V112M1314 110.5h2.5M1316.5 105.5h2.5" stroke="#089981"/><path d="M1319.5 102V109M1317 105.5h2.5M1319.5 106.5h2.5M1323.5 103V117M1321 106.5h2.5M1323.5 113.5h2.5M1326.5 112V121M1324 113.5h2.5M1326.5 116.5h2.5M1330.5 116V138M1328 116.5h2.5M1330.5 133.5h2.5" stroke="#f23645"/><path d="M1333.5 119V141M1331 133.5h2.5M1333.5 131.5h2.5" stroke="#089981"/><path d="M1336.5 131V139M1334 131.5h2.5M1336.5 138.5h2.5" stroke="#f23645"/><path d="M1340.5 126V140M1338 138.5h2.5M1340.5 128.5h2.5M1343.5 122V131M1341 128.5h2.5M1343.5 125.5h2.5" stroke="#089981"/><path d="M1346.5 125V133M1344 125.5h2.5M1346.5 132.5h2.5" stroke="#f23645"/><path d="M1350.5 122V135M1348 132.5h2.5M1350.5 122.5h2.5M1353.5 114V123M1351 122.5h2.5M1353.5 116.5h2.5M1357.5 104V123M1355 116.5h2.5M1357.5 105.5h2.5" stroke="#089981"/><path d="M1360.5 105V115M1358 105.5h2.5M1360.5 106.5h2.5M1363.5 107V142M1361 107.5h2.5M1363.5 136.5h2.5M1367.5 136V150M1365 136.5h2.5M1367.5 145.5h2.5" stroke="#f23645"/><path d="M1370.5 138V155M1368 145.5h2.5M1370.5 138.5h2.5M1373.5 131V140M1371 138.5h2.5M1373.5 132.5h2.5M1377.5 125V134M1375 132.5h2.5M1377.5 131.5h2.5M1380.5 102V133M1378 131.5h2.5M1380.5 106.5h2.5M1384.5 86V108M1382 106.5h2.5M1384.5 87.5h2.5" stroke="#089981"/><path d="M1387.5 78V106M1385 87.5h2.5M1387.5 103.5h2.5M1390.5 92V122M1388 103.5h2.5M1390.5 116.5h2.5M1394.5 116V160M1392 116.5h2.5M1394.5 159.5h2.5" stroke="#f23645"/><path d="M1397.5 142V163M1395 159.5h2.5M1397.5 154.5h2.5" stroke="#089981"/><path d="M1400.5 150V160M1398 154.5h2.5M1400.5 158.5h2.5" stroke="#f23645"/><path d="M1404.5 141V159M1402 158.5h2.5M1404.5 145.5h2.5" stroke="#089981"/><path d="M1407.5 145V162M1405 145.5h2.5M1407.5 160.5h2.5M1411.5 145V173M1409 160.5h2.5M1411.5 162.5h2.5M1414.5 147V171M1412 162.5h2.5M1414.5 162.5h2.5" stroke="#f23645"/><path d="M1417.5 152V173M1415 162.5h2.5M1417.5 155.5h2.5" stroke="#089981"/><path d="M1421.5 152V165M1419 155.5h2.5M1421.5 162.5h2.5" stroke="#f23645"/><path d="M1424.5 144V165M1422 162.5h2.5M1424.5 144.5h2.5M1427.5 136V154M1425 144.5h2.5M1427.5 137.5h2.5M1431.5 126V149M1429 137.5h2.5M1431.5 137.5h2.5M1434.5 128V141M1432 137.5h2.5M1434.5 134.5h2.5M1438.5 127V137M1436 134.5h2.5M1438.5 127.5h2.5" stroke="#089981"/><path d="M1441.5 124V139M1439 127.5h2.5M1441.5 132.5h2.5" stroke="#f23645"/><path d="M1444.5 129V138M1442 132.5h2.5M1444.5 134.5h2.5" stroke="#089981"/><path d="M1448.5 134V150M1446 134.5h2.5M1448.5 145.5h2.5M1451.5 128V148M1449 145.5h2.5M1451.5 147.5h2.5" stroke="#f23645"/><path d="M1454.5 140V148M1452 147.5h2.5M1454.5 147.5h2.5M1458.5 132V148M1456 147.5h2.5M1458.5 146.5h2.5M1461.5 131V151M1459 146.5h2.5M1461.5 132.5h2.5M1465.5 111V133M1463 132.5h2.5M1465.5 111.5h2.5" stroke="#089981"/><path d="M1468.5 108V123M1466 111.5h2.5M1468.5 118.5h2.5" stroke="#f23645"/><path d="M1471.5 113V125M1469 118.5h2.5M1471.5 115.5h2.5" stroke="#089981"/><path d="M1475.5 110V130M1473 115.5h2.5M1475.5 128.5h2.5" stroke="#f23645"/><path d="M1478.5 125V133M1476 128.5h2.5M1478.5 129.5h2.5" stroke="#089981"/></g></g>
<defs><linearGradient id="gg" x1="0" y1="520" x2="0" y2="548" gradientUnits="userSpaceOnUse"><stop offset="0" stop-color="#4caf50" stop-opacity="0.22"/><stop offset="1" stop-color="#4caf50" stop-opacity="0"/></linearGradient>
<linearGradient id="rg" x1="0" y1="702" x2="0" y2="722" gradientUnits="userSpaceOnUse"><stop offset="0" stop-color="#f23645" stop-opacity="0"/><stop offset="1" stop-color="#f23645" stop-opacity="0.22"/></linearGradient>
<clipPath id="cu"><rect x="12" y="502" width="1505" height="46"/></clipPath><clipPath id="cl"><rect x="12" y="702" width="1505" height="40"/></clipPath></defs>
<path d="M11.1 548.5L11.1 676.7L12.7 706.4L16.4 718.4L19.6 707.6L23.1 693.8L26.5 687.7L29.9 651.4L31.8 676.7L33.6 700.7L37.0 715.2L40.2 704.2L43.7 689.9L47.1 695.4L50.1 702.3L53.5 698.4L57.0 708.3L60.4 675.1L63.8 677.3L67.3 677.8L70.7 680.1L73.9 701.4L77.6 676.7L81.0 654.9L83.8 654.9L87.2 657.2L90.7 659.5L94.1 649.2L97.3 646.2L100.7 648.0L104.2 651.4L107.6 636.1L111.1 640.0L114.5 644.1L117.7 634.3L121.1 622.3L124.6 626.2L128.0 629.2L131.0 630.8L134.4 623.5L137.9 637.7L141.1 640.4L144.5 646.9L147.9 620.5L151.4 583.8L154.8 580.9L158.3 598.7L161.2 602.9L164.7 630.8L168.1 634.9L171.5 638.2L175.0 638.8L178.4 613.6L181.9 651.4L185.3 645.7L188.7 656.0L192.2 660.6L195.6 652.6L198.8 648.7L202.0 618.2L205.5 609.1L208.9 602.2L212.3 592.3L215.5 613.0L219.0 598.7L222.4 606.8L225.9 620.5L229.3 665.2L232.7 667.5L236.2 671.6L239.4 698.4L242.8 695.4L246.3 706.4L249.7 662.9L252.9 646.9L256.3 577.0L259.6 571.7L263.1 577.0L266.3 627.4L269.5 615.9L272.9 603.3L276.4 607.5L279.8 602.2L283.2 622.3L286.7 621.7L290.1 611.3L293.3 600.1L296.5 600.6L300.0 621.7L303.4 669.3L306.8 630.8L310.0 605.2L313.5 613.6L316.9 603.3L320.1 574.7L323.3 572.4L326.8 573.1L330.2 578.6L333.6 573.1L337.1 580.4L340.5 575.8L344.0 573.1L347.4 585.0L350.8 621.7L354.0 654.9L357.5 577.0L360.9 572.4L364.1 591.9L367.6 594.2L371.0 590.7L374.4 601.5L377.6 596.0L381.1 578.1L384.5 590.0L387.9 586.1L391.2 587.7L394.6 584.5L397.8 593.0L401.2 585.7L404.7 602.6L408.1 604.5L411.5 620.5L415.0 619.4L418.2 602.2L421.6 606.8L425.1 593.0L428.5 587.3L431.7 586.8L435.2 608.4L438.4 587.3L441.8 560.2L445.2 563.9L448.4 586.1L451.9 570.1L455.3 587.3L458.5 579.3L462.0 579.3L465.4 592.3L468.8 596.5L472.0 610.7L475.5 593.0L478.9 601.5L482.4 630.8L485.6 644.6L489.0 654.9L492.4 667.0L495.9 677.3L499.2 672.1L502.6 660.6L505.8 648.5L509.2 656.7L512.7 644.1L515.9 637.0L519.3 667.5L522.8 688.1L526.2 699.1L529.4 701.4L532.9 676.7L536.3 662.4L539.5 670.9L542.9 634.3L546.4 629.0L549.6 586.8L553.0 621.7L556.5 631.5L559.9 606.8L563.1 598.7L566.5 599.9L570.0 594.6L573.4 589.1L576.6 578.6L580.1 547.2L583.5 566.7L586.7 582.2L590.1 584.5L593.6 580.9L596.8 555.2L600.2 562.1L603.4 654.9L606.9 649.6L610.3 646.4L613.7 652.1L616.9 630.8L620.4 617.1L623.8 616.6L627.3 649.2L630.7 642.3L633.9 646.4L637.3 641.8L640.8 637.2L644.0 624.4L647.4 629.7L650.9 637.7L654.1 644.6L657.5 642.3L660.9 638.8L664.2 631.5L667.6 643.0L671.0 639.5L674.2 638.2L677.7 635.4L681.1 628.5L684.5 635.9L687.8 659.5L691.2 665.9L694.6 671.6L697.8 665.7L701.3 675.5L704.7 667.0L708.1 659.9L711.4 661.3L714.8 660.6L718.2 642.3L721.4 626.2L724.9 617.1L728.3 619.8L731.5 626.9L735.0 618.2L738.7 632.7L741.9 607.9L745.4 585.0L748.8 581.6L752.0 573.1L755.4 570.1L758.6 590.0L762.1 582.7L765.5 592.3L769.0 577.7L772.4 591.9L775.6 617.5L779.0 610.2L782.5 590.7L785.7 586.1L789.1 616.6L792.6 599.9L796.0 611.3L799.2 638.4L802.6 634.3L806.1 604.5L809.5 622.8L812.7 627.4L816.2 622.3L819.6 613.6L822.8 602.2L826.2 574.0L829.7 550.6L833.1 554.1L836.3 554.7L839.8 557.0L843.2 571.9L846.6 533.4L849.8 533.4L853.3 560.9L856.7 577.7L859.9 563.2L863.4 598.7L866.8 609.1L870.2 586.1L873.4 593.0L876.9 606.8L880.3 636.6L883.8 652.6L887.2 654.9L890.4 624.0L893.8 606.8L897.3 598.7L900.5 562.5L903.9 564.4L907.4 564.8L910.8 566.7L914.0 585.0L917.4 607.5L920.9 594.2L924.3 589.6L927.5 649.2L931.0 682.4L934.4 676.7L937.8 673.2L941.0 665.7L944.5 654.9L947.9 643.0L951.1 653.1L954.6 637.7L958.0 641.1L961.2 664.5L964.6 664.1L968.1 636.6L971.5 629.7L974.7 630.8L978.5 627.3L981.7 614.7L985.1 575.7L988.3 584.9L991.8 595.2L995.2 594.1L998.4 594.1L1001.9 545.9L1005.3 530.6L1008.5 533.3L1011.9 539.1L1015.4 545.9L1018.6 548.2L1022.0 559.2L1025.5 560.4L1028.7 562.0L1032.1 549.8L1035.5 547.8L1039.0 544.8L1042.2 553.3L1045.6 551.7L1049.1 562.4L1052.3 533.8L1055.7 559.0L1059.1 554.4L1062.3 551.2L1065.8 575.7L1069.2 579.2L1072.4 595.2L1075.9 582.6L1079.3 588.3L1082.7 593.6L1085.9 554.4L1089.4 570.0L1092.8 594.1L1096.0 577.3L1099.5 571.8L1102.9 596.3L1106.3 589.0L1109.6 590.2L1113.0 584.9L1116.4 552.8L1119.6 537.9L1123.1 525.3L1126.5 565.4L1129.9 564.3L1133.2 580.3L1136.6 572.3L1140.0 561.5L1143.2 581.5L1146.7 599.3L1150.1 604.4L1153.3 604.8L1156.8 610.1L1160.2 615.8L1163.6 604.8L1167.1 597.5L1170.3 591.3L1173.7 604.8L1177.1 579.8L1180.4 559.7L1183.8 534.5L1187.2 527.6L1190.4 568.8L1190.9 570.1L1194.1 590.3L1197.4 583.9L1201.0 584.6L1204.4 575.6L1207.6 607.6L1211.0 602.5L1214.4 597.2L1217.8 615.4L1220.3 615.4L1224.5 612.8L1228.1 609.2L1231.8 595.4L1234.6 593.3L1238.0 601.4L1241.5 599.1L1244.9 596.6L1248.1 621.6L1251.6 617.9L1255.1 620.2L1258.1 658.3L1261.5 635.9L1265.0 628.1L1268.4 615.9L1271.6 606.8L1275.1 607.9L1278.5 609.7L1281.7 605.6L1285.1 604.0L1288.6 601.7L1292.0 615.2L1295.2 638.4L1298.7 627.4L1302.1 613.6L1305.3 629.7L1308.7 620.5L1312.2 607.9L1315.6 594.6L1318.8 596.9L1322.3 627.4L1325.7 629.7L1329.1 672.8L1332.3 665.2L1335.8 679.4L1339.2 648.0L1342.7 640.7L1345.9 654.9L1349.3 629.0L1352.7 611.3L1356.2 591.4L1359.4 596.0L1362.8 656.0L1366.3 669.8L1369.7 654.9L1372.9 644.6L1376.3 635.9L1379.8 591.9L1383.0 570.8L1386.4 597.6L1389.9 618.2L1393.3 670.2L1396.5 661.8L1399.9 665.2L1403.4 648.0L1406.8 662.4L1410.0 664.1L1413.5 664.5L1416.9 652.6L1420.3 661.3L1423.5 633.1L1427.0 623.5L1430.4 621.7L1433.9 617.5L1437.1 608.6L1440.5 624.0L1443.9 620.5L1447.4 639.5L1450.6 641.8L1454.0 641.8L1457.5 621.7L1460.7 606.8L1464.1 581.6L1467.5 594.2L1471.0 590.7L1474.2 605.6L1477.6 620.1L1481.1 620.1L1481.1 548.5Z" fill="url(#gg)" clip-path="url(#cu)"/><path d="M11.1 701.5L11.1 676.7L12.7 706.4L16.4 718.4L19.6 707.6L23.1 693.8L26.5 687.7L29.9 651.4L31.8 676.7L33.6 700.7L37.0 715.2L40.2 704.2L43.7 689.9L47.1 695.4L50.1 702.3L53.5 698.4L57.0 708.3L60.4 675.1L63.8 677.3L67.3 677.8L70.7 680.1L73.9 701.4L77.6 676.7L81.0 654.9L83.8 654.9L87.2 657.2L90.7 659.5L94.1 649.2L97.3 646.2L100.7 648.0L104.2 651.4L107.6 636.1L111.1 640.0L114.5 644.1L117.7 634.3L121.1 622.3L124.6 626.2L128.0 629.2L131.0 630.8L134.4 623.5L137.9 637.7L141.1 640.4L144.5 646.9L147.9 620.5L151.4 583.8L154.8 580.9L158.3 598.7L161.2 602.9L164.7 630.8L168.1 634.9L171.5 638.2L175.0 638.8L178.4 613.6L181.9 651.4L185.3 645.7L188.7 656.0L192.2 660.6L195.6 652.6L198.8 648.7L202.0 618.2L205.5 609.1L208.9 602.2L212.3 592.3L215.5 613.0L219.0 598.7L222.4 606.8L225.9 620.5L229.3 665.2L232.7 667.5L236.2 671.6L239.4 698.4L242.8 695.4L246.3 706.4L249.7 662.9L252.9 646.9L256.3 577.0L259.6 571.7L263.1 577.0L266.3 627.4L269.5 615.9L272.9 603.3L276.4 607.5L279.8 602.2L283.2 622.3L286.7 621.7L290.1 611.3L293.3 600.1L296.5 600.6L300.0 621.7L303.4 669.3L306.8 630.8L310.0 605.2L313.5 613.6L316.9 603.3L320.1 574.7L323.3 572.4L326.8 573.1L330.2 578.6L333.6 573.1L337.1 580.4L340.5 575.8L344.0 573.1L347.4 585.0L350.8 621.7L354.0 654.9L357.5 577.0L360.9 572.4L364.1 591.9L367.6 594.2L371.0 590.7L374.4 601.5L377.6 596.0L381.1 578.1L384.5 590.0L387.9 586.1L391.2 587.7L394.6 584.5L397.8 593.0L401.2 585.7L404.7 602.6L408.1 604.5L411.5 620.5L415.0 619.4L418.2 602.2L421.6 606.8L425.1 593.0L428.5 587.3L431.7 586.8L435.2 608.4L438.4 587.3L441.8 560.2L445.2 563.9L448.4 586.1L451.9 570.1L455.3 587.3L458.5 579.3L462.0 579.3L465.4 592.3L468.8 596.5L472.0 610.7L475.5 593.0L478.9 601.5L482.4 630.8L485.6 644.6L489.0 654.9L492.4 667.0L495.9 677.3L499.2 672.1L502.6 660.6L505.8 648.5L509.2 656.7L512.7 644.1L515.9 637.0L519.3 667.5L522.8 688.1L526.2 699.1L529.4 701.4L532.9 676.7L536.3 662.4L539.5 670.9L542.9 634.3L546.4 629.0L549.6 586.8L553.0 621.7L556.5 631.5L559.9 606.8L563.1 598.7L566.5 599.9L570.0 594.6L573.4 589.1L576.6 578.6L580.1 547.2L583.5 566.7L586.7 582.2L590.1 584.5L593.6 580.9L596.8 555.2L600.2 562.1L603.4 654.9L606.9 649.6L610.3 646.4L613.7 652.1L616.9 630.8L620.4 617.1L623.8 616.6L627.3 649.2L630.7 642.3L633.9 646.4L637.3 641.8L640.8 637.2L644.0 624.4L647.4 629.7L650.9 637.7L654.1 644.6L657.5 642.3L660.9 638.8L664.2 631.5L667.6 643.0L671.0 639.5L674.2 638.2L677.7 635.4L681.1 628.5L684.5 635.9L687.8 659.5L691.2 665.9L694.6 671.6L697.8 665.7L701.3 675.5L704.7 667.0L708.1 659.9L711.4 661.3L714.8 660.6L718.2 642.3L721.4 626.2L724.9 617.1L728.3 619.8L731.5 626.9L735.0 618.2L738.7 632.7L741.9 607.9L745.4 585.0L748.8 581.6L752.0 573.1L755.4 570.1L758.6 590.0L762.1 582.7L765.5 592.3L769.0 577.7L772.4 591.9L775.6 617.5L779.0 610.2L782.5 590.7L785.7 586.1L789.1 616.6L792.6 599.9L796.0 611.3L799.2 638.4L802.6 634.3L806.1 604.5L809.5 622.8L812.7 627.4L816.2 622.3L819.6 613.6L822.8 602.2L826.2 574.0L829.7 550.6L833.1 554.1L836.3 554.7L839.8 557.0L843.2 571.9L846.6 533.4L849.8 533.4L853.3 560.9L856.7 577.7L859.9 563.2L863.4 598.7L866.8 609.1L870.2 586.1L873.4 593.0L876.9 606.8L880.3 636.6L883.8 652.6L887.2 654.9L890.4 624.0L893.8 606.8L897.3 598.7L900.5 562.5L903.9 564.4L907.4 564.8L910.8 566.7L914.0 585.0L917.4 607.5L920.9 594.2L924.3 589.6L927.5 649.2L931.0 682.4L934.4 676.7L937.8 673.2L941.0 665.7L944.5 654.9L947.9 643.0L951.1 653.1L954.6 637.7L958.0 641.1L961.2 664.5L964.6 664.1L968.1 636.6L971.5 629.7L974.7 630.8L978.5 627.3L981.7 614.7L985.1 575.7L988.3 584.9L991.8 595.2L995.2 594.1L998.4 594.1L1001.9 545.9L1005.3 530.6L1008.5 533.3L1011.9 539.1L1015.4 545.9L1018.6 548.2L1022.0 559.2L1025.5 560.4L1028.7 562.0L1032.1 549.8L1035.5 547.8L1039.0 544.8L1042.2 553.3L1045.6 551.7L1049.1 562.4L1052.3 533.8L1055.7 559.0L1059.1 554.4L1062.3 551.2L1065.8 575.7L1069.2 579.2L1072.4 595.2L1075.9 582.6L1079.3 588.3L1082.7 593.6L1085.9 554.4L1089.4 570.0L1092.8 594.1L1096.0 577.3L1099.5 571.8L1102.9 596.3L1106.3 589.0L1109.6 590.2L1113.0 584.9L1116.4 552.8L1119.6 537.9L1123.1 525.3L1126.5 565.4L1129.9 564.3L1133.2 580.3L1136.6 572.3L1140.0 561.5L1143.2 581.5L1146.7 599.3L1150.1 604.4L1153.3 604.8L1156.8 610.1L1160.2 615.8L1163.6 604.8L1167.1 597.5L1170.3 591.3L1173.7 604.8L1177.1 579.8L1180.4 559.7L1183.8 534.5L1187.2 527.6L1190.4 568.8L1190.9 570.1L1194.1 590.3L1197.4 583.9L1201.0 584.6L1204.4 575.6L1207.6 607.6L1211.0 602.5L1214.4 597.2L1217.8 615.4L1220.3 615.4L1224.5 612.8L1228.1 609.2L1231.8 595.4L1234.6 593.3L1238.0 601.4L1241.5 599.1L1244.9 596.6L1248.1 621.6L1251.6 617.9L1255.1 620.2L1258.1 658.3L1261.5 635.9L1265.0 628.1L1268.4 615.9L1271.6 606.8L1275.1 607.9L1278.5 609.7L1281.7 605.6L1285.1 604.0L1288.6 601.7L1292.0 615.2L1295.2 638.4L1298.7 627.4L1302.1 613.6L1305.3 629.7L1308.7 620.5L1312.2 607.9L1315.6 594.6L1318.8 596.9L1322.3 627.4L1325.7 629.7L1329.1 672.8L1332.3 665.2L1335.8 679.4L1339.2 648.0L1342.7 640.7L1345.9 654.9L1349.3 629.0L1352.7 611.3L1356.2 591.4L1359.4 596.0L1362.8 656.0L1366.3 669.8L1369.7 654.9L1372.9 644.6L1376.3 635.9L1379.8 591.9L1383.0 570.8L1386.4 597.6L1389.9 618.2L1393.3 670.2L1396.5 661.8L1399.9 665.2L1403.4 648.0L1406.8 662.4L1410.0 664.1L1413.5 664.5L1416.9 652.6L1420.3 661.3L1423.5 633.1L1427.0 623.5L1430.4 621.7L1433.9 617.5L1437.1 608.6L1440.5 624.0L1443.9 620.5L1447.4 639.5L1450.6 641.8L1454.0 641.8L1457.5 621.7L1460.7 606.8L1464.1 581.6L1467.5 594.2L1471.0 590.7L1474.2 605.6L1477.6 620.1L1481.1 620.1L1481.1 701.5Z" fill="url(#rg)" clip-path="url(#cl)"/>
<g id="rsi"><path d="M11.1 676.7L12.7 706.4L16.4 718.4L19.6 707.6L23.1 693.8L26.5 687.7L29.9 651.4L31.8 676.7L33.6 700.7L37.0 715.2L40.2 704.2L43.7 689.9L47.1 695.4L50.1 702.3L53.5 698.4L57.0 708.3L60.4 675.1L63.8 677.3L67.3 677.8L70.7 680.1L73.9 701.4L77.6 676.7L81.0 654.9L83.8 654.9L87.2 657.2L90.7 659.5L94.1 649.2L97.3 646.2L100.7 648.0L104.2 651.4L107.6 636.1L111.1 640.0L114.5 644.1L117.7 634.3L121.1 622.3L124.6 626.2L128.0 629.2L131.0 630.8L134.4 623.5L137.9 637.7L141.1 640.4L144.5 646.9L147.9 620.5L151.4 583.8L154.8 580.9L158.3 598.7L161.2 602.9L164.7 630.8L168.1 634.9L171.5 638.2L175.0 638.8L178.4 613.6L181.9 651.4L185.3 645.7L188.7 656.0L192.2 660.6L195.6 652.6L198.8 648.7L202.0 618.2L205.5 609.1L208.9 602.2L212.3 592.3L215.5 613.0L219.0 598.7L222.4 606.8L225.9 620.5L229.3 665.2L232.7 667.5L236.2 671.6L239.4 698.4L242.8 695.4L246.3 706.4L249.7 662.9L252.9 646.9L256.3 577.0L259.6 571.7L263.1 577.0L266.3 627.4L269.5 615.9L272.9 603.3L276.4 607.5L279.8 602.2L283.2 622.3L286.7 621.7L290.1 611.3L293.3 600.1L296.5 600.6L300.0 621.7L303.4 669.3L306.8 630.8L310.0 605.2L313.5 613.6L316.9 603.3L320.1 574.7L323.3 572.4L326.8 573.1L330.2 578.6L333.6 573.1L337.1 580.4L340.5 575.8L344.0 573.1L347.4 585.0L350.8 621.7L354.0 654.9L357.5 577.0L360.9 572.4L364.1 591.9L367.6 594.2L371.0 590.7L374.4 601.5L377.6 596.0L381.1 578.1L384.5 590.0L387.9 586.1L391.2 587.7L394.6 584.5L397.8 593.0L401.2 585.7L404.7 602.6L408.1 604.5L411.5 620.5L415.0 619.4L418.2 602.2L421.6 606.8L425.1 593.0L428.5 587.3L431.7 586.8L435.2 608.4L438.4 587.3L441.8 560.2L445.2 563.9L448.4 586.1L451.9 570.1L455.3 587.3L458.5 579.3L462.0 579.3L465.4 592.3L468.8 596.5L472.0 610.7L475.5 593.0L478.9 601.5L482.4 630.8L485.6 644.6L489.0 654.9L492.4 667.0L495.9 677.3L499.2 672.1L502.6 660.6L505.8 648.5L509.2 656.7L512.7 644.1L515.9 637.0L519.3 667.5L522.8 688.1L526.2 699.1L529.4 701.4L532.9 676.7L536.3 662.4L539.5 670.9L542.9 634.3L546.4 629.0L549.6 586.8L553.0 621.7L556.5 631.5L559.9 606.8L563.1 598.7L566.5 599.9L570.0 594.6L573.4 589.1L576.6 578.6L580.1 547.2L583.5 566.7L586.7 582.2L590.1 584.5L593.6 580.9L596.8 555.2L600.2 562.1L603.4 654.9L606.9 649.6L610.3 646.4L613.7 652.1L616.9 630.8L620.4 617.1L623.8 616.6L627.3 649.2L630.7 642.3L633.9 646.4L637.3 641.8L640.8 637.2L644.0 624.4L647.4 629.7L650.9 637.7L654.1 644.6L657.5 642.3L660.9 638.8L664.2 631.5L667.6 643.0L671.0 639.5L674.2 638.2L677.7 635.4L681.1 628.5L684.5 635.9L687.8 659.5L691.2 665.9L694.6 671.6L697.8 665.7L701.3 675.5L704.7 667.0L708.1 659.9L711.4 661.3L714.8 660.6L718.2 642.3L721.4 626.2L724.9 617.1L728.3 619.8L731.5 626.9L735.0 618.2L738.7 632.7L741.9 607.9L745.4 585.0L748.8 581.6L752.0 573.1L755.4 570.1L758.6 590.0L762.1 582.7L765.5 592.3L769.0 577.7L772.4 591.9L775.6 617.5L779.0 610.2L782.5 590.7L785.7 586.1L789.1 616.6L792.6 599.9L796.0 611.3L799.2 638.4L802.6 634.3L806.1 604.5L809.5 622.8L812.7 627.4L816.2 622.3L819.6 613.6L822.8 602.2L826.2 574.0L829.7 550.6L833.1 554.1L836.3 554.7L839.8 557.0L843.2 571.9L846.6 533.4L849.8 533.4L853.3 560.9L856.7 577.7L859.9 563.2L863.4 598.7L866.8 609.1L870.2 586.1L873.4 593.0L876.9 606.8L880.3 636.6L883.8 652.6L887.2 654.9L890.4 624.0L893.8 606.8L897.3 598.7L900.5 562.5L903.9 564.4L907.4 564.8L910.8 566.7L914.0 585.0L917.4 607.5L920.9 594.2L924.3 589.6L927.5 649.2L931.0 682.4L934.4 676.7L937.8 673.2L941.0 665.7L944.5 654.9L947.9 643.0L951.1 653.1L954.6 637.7L958.0 641.1L961.2 664.5L964.6 664.1L968.1 636.6L971.5 629.7L974.7 630.8L978.5 627.3L981.7 614.7L985.1 575.7L988.3 584.9L991.8 595.2L995.2 594.1L998.4 594.1L1001.9 545.9L1005.3 530.6L1008.5 533.3L1011.9 539.1L1015.4 545.9L1018.6 548.2L1022.0 559.2L1025.5 560.4L1028.7 562.0L1032.1 549.8L1035.5 547.8L1039.0 544.8L1042.2 553.3L1045.6 551.7L1049.1 562.4L1052.3 533.8L1055.7 559.0L1059.1 554.4L1062.3 551.2L1065.8 575.7L1069.2 579.2L1072.4 595.2L1075.9 582.6L1079.3 588.3L1082.7 593.6L1085.9 554.4L1089.4 570.0L1092.8 594.1L1096.0 577.3L1099.5 571.8L1102.9 596.3L1106.3 589.0L1109.6 590.2L1113.0 584.9L1116.4 552.8L1119.6 537.9L1123.1 525.3L1126.5 565.4L1129.9 564.3L1133.2 580.3L1136.6 572.3L1140.0 561.5L1143.2 581.5L1146.7 599.3L1150.1 604.4L1153.3 604.8L1156.8 610.1L1160.2 615.8L1163.6 604.8L1167.1 597.5L1170.3 591.3L1173.7 604.8L1177.1 579.8L1180.4 559.7L1183.8 534.5L1187.2 527.6L1190.4 568.8L1190.9 570.1L1194.1 590.3L1197.4 583.9L1201.0 584.6L1204.4 575.6L1207.6 607.6L1211.0 602.5L1214.4 597.2L1217.8 615.4L1220.3 615.4L1224.5 612.8L1228.1 609.2L1231.8 595.4L1234.6 593.3L1238.0 601.4L1241.5 599.1L1244.9 596.6L1248.1 621.6L1251.6 617.9L1255.1 620.2L1258.1 658.3L1261.5 635.9L1265.0 628.1L1268.4 615.9L1271.6 606.8L1275.1 607.9L1278.5 609.7L1281.7 605.6L1285.1 604.0L1288.6 601.7L1292.0 615.2L1295.2 638.4L1298.7 627.4L1302.1 613.6L1305.3 629.7L1308.7 620.5L1312.2 607.9L1315.6 594.6L1318.8 596.9L1322.3 627.4L1325.7 629.7L1329.1 672.8L1332.3 665.2L1335.8 679.4L1339.2 648.0L1342.7 640.7L1345.9 654.9L1349.3 629.0L1352.7 611.3L1356.2 591.4L1359.4 596.0L1362.8 656.0L1366.3 669.8L1369.7 654.9L1372.9 644.6L1376.3 635.9L1379.8 591.9L1383.0 570.8L1386.4 597.6L1389.9 618.2L1393.3 670.2L1396.5 661.8L1399.9 665.2L1403.4 648.0L1406.8 662.4L1410.0 664.1L1413.5 664.5L1416.9 652.6L1420.3 661.3L1423.5 633.1L1427.0 623.5L1430.4 621.7L1433.9 617.5L1437.1 608.6L1440.5 624.0L1443.9 620.5L1447.4 639.5L1450.6 641.8L1454.0 641.8L1457.5 621.7L1460.7 606.8L1464.1 581.6L1467.5 594.2L1471.0 590.7L1474.2 605.6L1477.6 620.1L1481.1 620.1" stroke="#7e57c2" stroke-width="1.15" fill="none" stroke-linejoin="round"/><path d="M11.1 645.7L14.6 653.7L19.2 660.2L23.7 665.2L29.9 669.3L33.6 675.5L37.0 681.7L40.2 684.7L43.7 687.0L47.1 690.4L52.4 695.4L57.0 698.9L60.4 696.1L63.8 693.2L67.3 691.1L70.7 690.4L73.9 691.5L77.6 693.8L81.0 690.4L85.6 684.7L90.7 680.1L97.3 672.1L104.2 664.7L111.1 658.8L117.7 653.7L124.6 644.6L131.0 641.1L137.9 637.2L144.5 636.1L147.9 634.9L154.8 626.2L161.2 620.1L164.7 619.8L171.5 621.7L175.0 622.3L178.4 621.7L185.3 624.0L192.2 625.8L195.6 628.1L198.8 632.0L202.0 634.7L205.5 635.9L208.9 635.9L212.3 633.1L215.5 631.5L222.4 626.7L225.9 626.9L232.7 629.0L236.2 630.4L242.8 635.9L249.7 643.4L252.9 646.2L256.3 644.6L259.6 642.7L263.1 640.4L266.3 642.3L269.5 643.4L272.9 642.3L276.4 638.2L279.8 633.6L283.2 630.1L286.7 625.1L290.1 618.2L293.3 611.3L296.5 606.8L300.0 604.7L303.4 610.7L306.8 615.9L310.0 617.8L313.5 617.1L316.9 615.9L320.1 613.6L326.8 609.7L333.6 603.8L340.5 598.7L347.4 594.2L350.8 590.3L354.0 591.4L357.5 589.1L360.9 586.1L364.1 585.5L371.0 588.4L377.6 591.4L384.5 592.6L391.2 594.2L394.6 594.6L397.8 593.0L401.2 588.4L404.7 590.0L411.5 594.2L418.2 596.9L425.1 597.1L431.7 597.6L435.2 598.7L438.4 599.2L441.8 597.6L445.2 595.3L448.4 595.3L451.9 593.0L455.3 591.4L458.5 588.4L462.0 585.7L465.4 585.0L468.8 584.5L472.0 585.5L475.5 586.1L478.9 587.3L482.4 589.1L485.6 593.0L489.0 599.9L492.4 606.8L495.9 614.3L499.2 621.7L505.8 630.8L509.2 635.9L512.7 640.4L515.9 643.4L519.3 647.3L522.8 653.7L526.2 660.6L529.4 665.2L532.9 667.5L536.3 668.2L539.5 668.2L542.9 665.2L546.4 661.8L549.6 656.7L553.0 654.9L556.5 653.1L559.9 650.8L563.1 648.0L566.5 643.9L570.0 637.7L573.4 630.4L576.6 621.7L580.1 613.0L583.5 605.2L586.7 598.7L590.1 594.2L593.6 590.0L596.8 587.3L600.2 584.1L603.4 585.5L606.9 588.4L610.3 592.3L613.7 596.5L616.9 598.7L620.4 601.0L623.8 603.3L627.3 610.7L630.7 616.6L633.9 621.2L637.3 625.8L640.8 629.7L644.0 634.3L647.4 638.4L650.9 637.0L654.1 636.6L657.5 636.6L660.9 635.9L664.2 635.4L667.6 637.2L671.0 638.8L674.2 638.2L677.7 637.7L681.1 636.6L684.5 636.1L687.8 637.7L691.2 640.7L694.6 643.4L697.8 645.7L701.3 648.0L704.7 649.8L708.1 651.4L711.4 653.3L714.8 654.4L718.2 654.9L721.4 654.4L724.9 653.1L728.3 652.1L731.5 651.4L735.0 648.7L738.7 645.7L741.9 641.1L745.4 634.9L748.8 628.1L752.0 621.2L755.4 614.8L758.6 609.1L762.1 603.8L765.5 600.6L769.0 598.1L772.4 596.9L775.6 596.7L779.0 595.3L782.5 593.0L785.7 590.3L789.1 590.7L792.6 591.9L796.0 594.2L799.2 598.7L802.6 603.3L806.1 604.5L809.5 607.9L812.7 610.2L816.2 613.0L819.6 614.1L822.8 613.6L826.2 610.7L829.7 607.5L833.1 604.5L836.3 600.6L839.8 597.6L843.2 594.8L846.6 587.3L849.8 580.4L853.3 577.0L856.7 573.5L859.9 569.4L863.4 567.8L866.8 567.1L870.2 566.0L873.4 567.1L876.9 571.2L880.3 577.0L883.8 583.8L887.2 590.7L890.4 594.8L893.8 600.6L897.3 605.2L900.5 605.2L903.9 604.7L907.4 604.5L910.8 602.2L914.0 600.6L917.4 602.2L920.9 601.7L924.3 601.0L927.5 601.7L931.0 603.8L934.4 605.6L937.8 609.1L941.0 612.5L944.5 616.6L947.9 621.7L951.1 627.4L954.6 633.1L958.0 638.8L961.2 644.6L964.6 649.2L968.1 652.6L971.5 655.3L974.7 654.4L978.5 650.2L981.7 645.6L985.1 638.7L988.3 633.0L991.8 628.0L995.2 623.8L998.4 619.3L1001.9 612.4L1005.3 604.4L1008.5 596.3L1011.9 587.9L1015.4 580.8L1018.6 574.6L1022.0 569.3L1025.5 564.7L1028.7 562.0L1032.1 559.7L1035.5 556.9L1039.0 554.0L1042.2 551.2L1045.6 548.9L1049.1 549.4L1052.3 549.8L1055.7 551.7L1059.1 552.8L1062.3 553.5L1065.8 555.1L1069.2 556.7L1072.4 559.0L1075.9 560.8L1079.3 563.6L1082.7 566.6L1085.9 567.2L1089.4 568.4L1092.8 570.7L1096.0 571.8L1099.5 574.1L1102.9 576.9L1106.3 579.8L1109.6 582.6L1113.0 583.3L1116.4 581.5L1119.6 577.3L1123.1 573.4L1126.5 571.1L1129.9 569.5L1133.2 571.1L1136.6 571.4L1140.0 569.5L1143.2 570.0L1146.7 571.8L1150.1 572.3L1153.3 573.4L1156.8 575.0L1160.2 577.3L1163.6 581.0L1167.1 585.3L1170.3 589.5L1173.7 592.9L1177.1 593.6L1180.4 592.5L1183.8 589.5L1187.2 587.2L1190.4 586.0L1190.9 586.0L1194.1 584.6L1197.4 583.0L1201.0 582.1L1204.4 579.5L1207.6 579.1L1214.4 579.1L1217.8 581.0L1221.2 581.6L1224.5 583.9L1228.1 588.0L1231.8 593.5L1234.6 596.8L1238.0 599.3L1241.5 599.5L1244.9 600.4L1248.1 603.2L1251.6 606.0L1255.1 607.3L1258.1 611.3L1261.5 614.1L1265.0 615.0L1268.4 615.0L1271.6 614.8L1275.1 614.8L1278.5 615.7L1281.7 616.4L1285.1 616.6L1288.6 617.1L1292.0 618.5L1295.2 619.4L1298.7 620.1L1302.1 618.9L1305.3 617.5L1308.7 616.2L1312.2 614.8L1315.6 613.4L1318.8 612.5L1322.3 613.6L1325.7 615.5L1329.1 620.1L1332.3 625.1L1335.8 629.7L1339.2 632.0L1342.7 632.4L1345.9 634.3L1349.3 635.4L1352.7 634.3L1356.2 632.4L1359.4 631.5L1362.8 635.4L1366.3 640.0L1369.7 643.0L1372.9 643.9L1376.3 642.3L1379.8 637.7L1383.0 630.8L1386.4 626.2L1389.9 624.0L1393.3 625.1L1396.5 627.4L1399.9 630.8L1403.4 635.4L1406.8 640.0L1410.0 640.4L1413.5 640.2L1416.9 640.0L1420.3 641.1L1423.5 641.8L1427.0 643.4L1430.4 646.4L1433.9 647.8L1437.1 646.9L1440.5 644.1L1443.9 641.1L1447.4 638.8L1450.6 638.2L1454.0 636.6L1457.5 633.6L1460.7 629.7L1464.1 625.1L1467.5 620.5L1471.0 617.1L1474.2 615.7L1477.6 615.5L1481.1 615.5" stroke="#f5d327" stroke-width="1.2" fill="none" stroke-linejoin="round"/></g>
<g id="paxis"><text x="1528" y="475.9">107,000</text><text x="1528" y="435.6">108,000</text><text x="1528" y="395.2">109,000</text><text x="1528" y="354.9">110,000</text><text x="1528" y="314.6">111,000</text><text x="1528" y="274.3">112,000</text><text x="1528" y="234.0">113,000</text><text x="1528" y="193.6">114,000</text><text x="1528" y="153.3">115,000</text><text x="1528" y="113.0">116,000</text><text x="1528" y="72.7">117,000</text></g>
<!-- USD box covers top label -->
<rect x="1517.5" y="31" width="67" height="36" fill="#0f0f0f"/>
<rect x="1521.5" y="34.5" width="62" height="29" rx="4.5" fill="#0f0f0f" stroke="#404040" stroke-width="1.2"/>
<text x="1532" y="53.5" style="font-size:13.2px;fill:#d0d0d0;letter-spacing:-1.1px" stroke="#d0d0d0" stroke-width="0.3">USD</text>
<g id="raxis"><text x="1528" y="515.1">80.00</text><text x="1528" y="553.4">70.00</text><text x="1528" y="591.6">60.00</text><text x="1528" y="668.1">40.00</text><text x="1528" y="706.4">30.00</text></g>
<g id="taxis"><text x="70.8" y="759" text-anchor="middle">30</text><text x="151.9" y="759" text-anchor="middle">31</text><text x="232.9" y="759" text-anchor="middle" font-weight="bold">Sep</text><text x="314.0" y="759" text-anchor="middle">2</text><text x="395.1" y="759" text-anchor="middle">3</text><text x="476.1" y="759" text-anchor="middle">4</text><text x="557.2" y="759" text-anchor="middle">5</text><text x="638.3" y="759" text-anchor="middle">6</text><text x="719.4" y="759" text-anchor="middle">7</text><text x="800.4" y="759" text-anchor="middle">8</text><text x="881.5" y="759" text-anchor="middle">9</text><text x="962.6" y="759" text-anchor="middle">10</text><text x="1043.6" y="759" text-anchor="middle">11</text><text x="1124.7" y="759" text-anchor="middle">12</text><text x="1205.8" y="759" text-anchor="middle">13</text><text x="1286.8" y="759" text-anchor="middle">14</text><text x="1367.9" y="759" text-anchor="middle">15</text><text x="1449.0" y="759" text-anchor="middle">16</text></g>
<!-- last price labels -->
<rect x="1461" y="121" width="56" height="19" rx="2.5" fill="#089981"/>
<rect x="1518" y="121" width="64" height="19" rx="2.5" fill="#089981"/>
<rect x="1514" y="121" width="3" height="19" fill="#089981"/><rect x="1518" y="121" width="3" height="19" fill="#089981"/>
<text x="1465" y="135.2" style="fill:#fff;font-size:13px;letter-spacing:-1.1px" stroke="#fff" stroke-width="0.35">BTCUSD</text>
<text x="1528.5" y="134.2" style="fill:#fff;letter-spacing:0.3px" stroke="#fff" stroke-width="0.35">115,498</text>
<!-- RSI labels -->
<rect x="1518" y="592" width="49" height="19" rx="2" fill="#fdd835"/>
<rect x="1518" y="611.5" width="49" height="19" rx="2" fill="#7e57c2"/>
<text x="1528" y="606.5" style="fill:#1a1a1a">52.38</text>
<text x="1528" y="626" style="fill:#fff" stroke="#fff" stroke-width="0.35">51.17</text>
<!-- flag icon -->
<g id="flag">
<circle cx="1483.1" cy="486.2" r="11.3" fill="none" stroke="#ab47bc" stroke-width="1.7"/>
<circle cx="1488.6" cy="486.3" r="13.4" fill="#0f0f0f"/>
<clipPath id="fc"><circle cx="1488.8" cy="486.8" r="9.2"/></clipPath>
<g clip-path="url(#fc)">
<rect x="1478" y="476" width="22" height="22" fill="#ef5350"/>
<rect x="1478" y="482.1" width="22" height="2.9" fill="#fafafa"/>
<rect x="1478" y="488.8" width="22" height="3.3" fill="#fafafa"/>
<rect x="1478" y="476" width="12.8" height="12.8" fill="#1e88e5"/>
<g fill="#bbdefb"><rect x="1481" y="479.2" width="1.9" height="1.9"/><rect x="1484" y="479.2" width="1.9" height="1.9"/><rect x="1487" y="479.2" width="1.9" height="1.9"/>
<rect x="1481" y="482.2" width="1.9" height="1.9"/><rect x="1484" y="482.2" width="1.9" height="1.9"/><rect x="1487" y="482.2" width="1.9" height="1.9"/>
<rect x="1481" y="485.1" width="1.9" height="1.9"/><rect x="1484" y="485.1" width="1.9" height="1.9"/><rect x="1487" y="485.1" width="1.9" height="1.9"/></g>
</g>
<circle cx="1488.6" cy="486.3" r="11.5" fill="none" stroke="#f23645" stroke-width="2"/>
<path d="M1470.6 484.4 Q1471.6 489.4 1476.6 490.4 Q1471.6 491.4 1470.6 496.4 Q1469.6 491.4 1464.6 490.4 Q1469.6 489.4 1470.6 484.4Z" fill="#7c4dff" stroke="#0f0f0f" stroke-width="2.2" paint-order="stroke"/>
</g>
<!-- TV logo icon -->
<g fill="#dbdbdb"><path d="M13 795H26.9V812H19.85V801.75H13Z"/><circle cx="32.45" cy="798.35" r="3.4"/><path d="M39.7 795H46.8L40.85 812H32.4Z"/></g>
</svg>
<div class="hd">trishacrypto7 created with TradingView.com, Sep 16, 2025 10:42 UTC</div>
<div class="lg"><span style="left:0;letter-spacing:0.47px">Bitcoin / U.S. Dollar · 1h · Bitstamp</span>
<span style="left:224px">O</span><span class="gr" style="left:234.5px">115,497</span>
<span style="left:289px">H</span><span class="gr" style="left:298.5px">115,615</span>
<span style="left:353.5px">L</span><span class="gr" style="left:361px">115,424</span>
<span style="left:416px">C</span><span class="gr" style="left:424.5px">115,498</span>
<span class="gr" style="left:480px;letter-spacing:-0.22px">+1 (+0.00%)</span></div>
<div class="lg" style="top:511.5px"><span style="left:0">RSI (14, close)</span><span style="left:95px;color:#7e57c2">51.17</span><span style="left:136px;color:#fdd835">52.38</span></div>
<div class="logo">TradingView</div>
</body></html>
